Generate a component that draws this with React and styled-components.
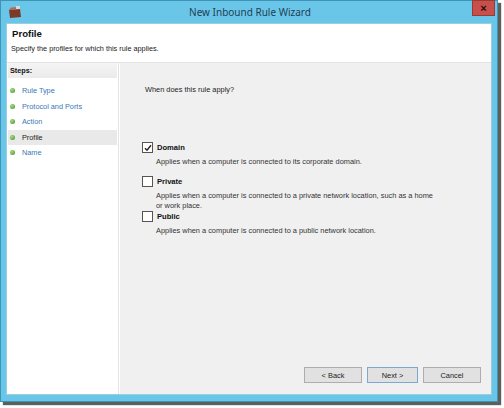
import React from "react";
import styled, { createGlobalStyle } from "styled-components";

const Global = createGlobalStyle`
  html, body { margin: 0; padding: 0; background: #ffffff; }
  body { font-family: "Liberation Sans", Arial, sans-serif; }
`;

const Page = styled.div`
  width: 504px;
  height: 408px;
  box-sizing: border-box;
  padding: 0 6px 6px 0;
  display: flex;
`;

const Window = styled.div`
  flex: 1;
  display: flex;
  flex-direction: column;
  background: #6ac6e8;
  border: 1px solid #3f94b6;
  box-shadow: 3px 3px 1px rgba(40, 40, 40, 0.75);
`;

const TitleBar = styled.div`
  height: 22px;
  display: flex;
  align-items: center;
  position: relative;
  padding-left: 6px;
`;

const AppIcon = styled.svg`
  width: 16px;
  height: 14px;
`;

const Title = styled.div`
  flex: 1;
  text-align: center;
  font-size: 10px;
  color: #1f3f55;
  font-family: "Noto Sans", "Liberation Sans", sans-serif;
  padding-right: 20px;
`;

const CloseButton = styled.div`
  position: absolute;
  top: -1px;
  right: 2px;
  width: 23px;
  height: 16px;
  background: #c7504a;
  border: 1px solid #9a3a36;
  box-sizing: border-box;
  display: flex;
  align-items: center;
  justify-content: center;
  color: #2a0c0a;
  font-size: 11px;
  font-weight: bold;
`;

const Client = styled.div`
  flex: 1;
  margin: 0 5px 6px 5px;
  display: flex;
  flex-direction: column;
  background: #ffffff;
  border: 1px solid #9ccde0;
`;

const Header = styled.div`
  height: 34px;
  padding: 4px 0 0 4px;
  display: flex;
  flex-direction: column;
  gap: 5px;
  border-bottom: 1px solid #e3e3e3;
`;

const HeaderTitle = styled.div`
  font-size: 9.6px;
  font-weight: bold;
  color: #111;
  padding-left: 1px;
`;

const HeaderSub = styled.div`
  font-size: 7.3px;
  color: #222;
`;

const Body = styled.div`
  flex: 1;
  display: flex;
`;

const Sidebar = styled.div`
  width: 111px;
  background: #ffffff;
  border-right: 1px solid #e4e4e4;
  display: flex;
  flex-direction: column;
`;

const StepsHead = styled.div`
  margin: 0 1px 5px 1px;
  height: 15px;
  padding-left: 2px;
  display: flex;
  align-items: center;
  font-size: 7.3px;
  font-weight: bold;
  color: #111;
  background: linear-gradient(#f4f4f4, #ebebeb);
`;

const StepRow = styled.div`
  height: 15.5px;
  margin: 0 1px;
  display: flex;
  align-items: center;
  gap: 7px;
  padding-left: 2px;
  font-size: 7.3px;
  color: ${(p) => (p.$active ? "#222" : "#3a78b5")};
  background: ${(p) => (p.$active ? "#e9e9e9" : "transparent")};
`;

const Dot = styled.span`
  width: 5px;
  height: 5px;
  border-radius: 50%;
  background: radial-gradient(circle at 35% 35%, #a8dc7e, #3f8f2a);
`;

const Main = styled.div`
  flex: 1;
  background: #f0f0f0;
  display: flex;
  flex-direction: column;
  padding: 22px 0 0 25px;
  margin-left: 1px;
`;

const Question = styled.div`
  font-size: 7.4px;
  color: #222;
  margin-bottom: 48px;
`;

const Option = styled.div`
  display: flex;
  flex-direction: column;
  margin-bottom: ${(p) => p.$gap}px;
`;

const OptionHead = styled.div`
  display: flex;
  align-items: center;
  gap: 4px;
  margin-left: -3px;
`;

const Box = styled.span`
  width: 9px;
  height: 9px;
  border: 1px solid #555;
  background: #fff;
  display: flex;
  align-items: center;
  justify-content: center;
`;

const OptionLabel = styled.span`
  font-size: 7.6px;
  font-weight: bold;
  color: #111;
`;

const OptionText = styled.div`
  font-size: 7.4px;
  color: #333;
  margin-left: 11px;
  margin-top: 4px;
  line-height: 10px;
  max-width: 285px;
`;

const Footer = styled.div`
  margin-top: auto;
  display: flex;
  justify-content: flex-end;
  gap: 5px;
  padding: 0 10px 11px 0;
`;

const Button = styled.div`
  width: ${(p) => p.$w}px;
  height: 14px;
  border: 1px solid ${(p) => (p.$focus ? "#7aa9d6" : "#adadad")};
  background: #e1e1e1;
  display: flex;
  align-items: center;
  justify-content: center;
  font-size: 7.4px;
  color: #222;
`;

const Check = () => (
  <svg width="8" height="8" viewBox="0 0 8 8">
    <path d="M1 4.2 L3 6.3 L7 1.2" fill="none" stroke="#222" strokeWidth="1.4" />
  </svg>
);

const steps = [
  { label: "Rule Type" },
  { label: "Protocol and Ports" },
  { label: "Action" },
  { label: "Profile", active: true },
  { label: "Name" },
];

const options = [
  {
    label: "Domain",
    checked: true,
    text: "Applies when a computer is connected to its corporate domain.",
    gap: 9,
  },
  {
    label: "Private",
    checked: false,
    text:
      "Applies when a computer is connected to a private network location, such as a home or work place.",
    gap: 0,
  },
  {
    label: "Public",
    checked: false,
    text: "Applies when a computer is connected to a public network location.",
    gap: 0,
  },
];

export default function App() {
  return (
    <>
      <Global />
      <Page>
        <Window>
          <TitleBar>
            <AppIcon viewBox="0 0 16 14">
              <path d="M2 5 L13 4 L14 12 L3 13 Z" fill="#7a3a2a" />
              <path d="M2 5 L13 4 L12 2 L4 2.5 Z" fill="#b46a4a" />
              <rect x="9" y="1" width="4" height="3" fill="#d8d8d8" />
            </AppIcon>
            <Title>New Inbound Rule Wizard</Title>
            <CloseButton>×</CloseButton>
          </TitleBar>
          <Client>
            <Header>
              <HeaderTitle>Profile</HeaderTitle>
              <HeaderSub>Specify the profiles for which this rule applies.</HeaderSub>
            </Header>
            <Body>
              <Sidebar>
                <StepsHead>Steps:</StepsHead>
                {steps.map((s) => (
                  <StepRow key={s.label} $active={s.active}>
                    <Dot />
                    {s.label}
                  </StepRow>
                ))}
              </Sidebar>
              <Main>
                <Question>When does this rule apply?</Question>
                {options.map((o) => (
                  <Option key={o.label} $gap={o.gap}>
                    <OptionHead>
                      <Box>{o.checked && <Check />}</Box>
                      <OptionLabel>{o.label}</OptionLabel>
                    </OptionHead>
                    <OptionText>{o.text}</OptionText>
                  </Option>
                ))}
                <Footer>
                  <Button $w={56}>&lt; Back</Button>
                  <Button $w={49} $focus>Next &gt;</Button>
                  <Button $w={56}>Cancel</Button>
                </Footer>
              </Main>
            </Body>
          </Client>
        </Window>
      </Page>
    </>
  );
}
